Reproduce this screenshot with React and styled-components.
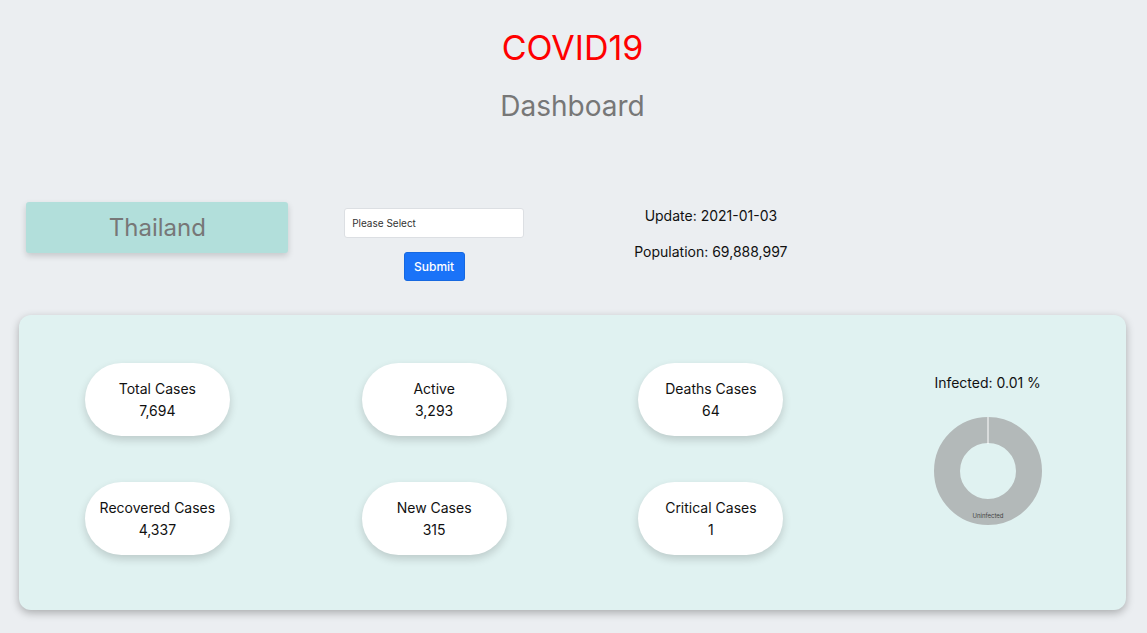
import React from 'react';
import styled, { createGlobalStyle } from 'styled-components';

const GlobalStyle = createGlobalStyle`
  body {
    margin: 0;
    background: #ebeef1;
    font-family: Inter, "Noto Sans", sans-serif;
    color: #111;
  }
`;

const Page = styled.div`
  padding: 0 21px 20px 19px;
`;

const Header = styled.div`
  text-align: center;
  padding-top: 27px;
`;

const Title = styled.h1`
  margin: 0;
  font-size: 34px;
  font-weight: 400;
  color: #ff0000;
  line-height: 42px;
`;

const SubTitle = styled.h2`
  margin: 19px 0 0 0;
  font-size: 28px;
  font-weight: 400;
  color: #777;
  line-height: 36px;
`;

const Row = styled.div`
  display: grid;
  grid-template-columns: repeat(4, 1fr);
  align-items: start;
`;

const TopRow = styled(Row)`
  margin-top: 77px;
  height: 114px;
`;

const Cell = styled.div`
  display: flex;
  flex-direction: column;
  align-items: center;
`;

const CountryBox = styled.div`
  width: 262px;
  height: 51px;
  margin-top: 1px;
  background: #b2dfdb;
  border-radius: 3px;
  box-shadow: 0 3px 6px rgba(0, 0, 0, 0.16);
  display: flex;
  align-items: center;
  justify-content: center;
  color: #777;
  font-size: 24px;
`;

const Select = styled.div`
  box-sizing: border-box;
  width: 180px;
  height: 30px;
  margin-top: 7px;
  background: #fff;
  border: 1px solid #dcdfe3;
  border-radius: 3px;
  display: flex;
  align-items: center;
  padding-left: 7px;
  font-size: 10px;
  color: #333;
`;

const SubmitButton = styled.button`
  box-sizing: border-box;
  margin-top: 14px;
  width: 61px;
  height: 29px;
  background: #1a73f8;
  color: #fff;
  border: 1px solid #1668e0;
  border-radius: 3px;
  font-family: inherit;
  font-size: 12px;
  font-weight: 500;
`;

const InfoText = styled.div`
  font-size: 14px;
  line-height: 20px;
  margin-top: ${p => p.$top}px;
`;

const Panel = styled.div`
  background: #e0f2f1;
  border-radius: 12px;
  box-shadow: 0 3px 8px rgba(0, 0, 0, 0.28);
  height: 295px;
  display: grid;
  grid-template-columns: repeat(4, 1fr);
`;

const CardGrid = styled.div`
  grid-column: span 3;
  display: grid;
  grid-template-columns: repeat(3, 1fr);
  row-gap: 46px;
  padding-top: 48px;
  align-content: start;
`;

const Card = styled.div`
  justify-self: center;
  width: 145px;
  height: 73px;
  background: #fff;
  border-radius: 37px;
  box-shadow: 0 4px 8px rgba(0, 0, 0, 0.16);
  display: flex;
  flex-direction: column;
  align-items: center;
  justify-content: center;
  font-size: 14px;
  line-height: 22px;
`;

const ChartCell = styled.div`
  display: flex;
  flex-direction: column;
  align-items: center;
  padding-top: 58px;
`;

const ChartLabel = styled.div`
  font-size: 14px;
  line-height: 20px;
  margin-bottom: 23px;
`;

const stats = [
  ['Total Cases', '7,694'],
  ['Active', '3,293'],
  ['Deaths Cases', '64'],
  ['Recovered Cases', '4,337'],
  ['New Cases', '315'],
  ['Critical Cases', '1'],
];

function Donut() {
  return (
    <svg width="110" height="110" viewBox="0 0 110 110">
      <circle cx="55" cy="55" r="41" fill="none" stroke="#b3b9b9" strokeWidth="26" />
      <line x1="55" y1="1" x2="55" y2="28" stroke="#ffffff" strokeWidth="1" />
      <text x="55" y="102" fontSize="6" textAnchor="middle" fill="#444" fontFamily="Inter, sans-serif">Uninfected</text>
    </svg>
  );
}

export default function App() {
  return (
    <Page>
      <GlobalStyle />
      <Header>
        <Title>COVID19</Title>
        <SubTitle>Dashboard</SubTitle>
      </Header>

      <TopRow>
        <Cell>
          <CountryBox>Thailand</CountryBox>
        </Cell>
        <Cell>
          <Select>Please Select</Select>
          <SubmitButton>Submit</SubmitButton>
        </Cell>
        <Cell>
          <InfoText $top={5}>Update: 2021-01-03</InfoText>
          <InfoText $top={16}>Population: 69,888,997</InfoText>
        </Cell>
        <Cell />
      </TopRow>

      <Panel>
        <CardGrid>
          {stats.map(([label, value]) => (
            <Card key={label}>
              <div>{label}</div>
              <div>{value}</div>
            </Card>
          ))}
        </CardGrid>
        <ChartCell>
          <ChartLabel>Infected: 0.01 %</ChartLabel>
          <Donut />
        </ChartCell>
      </Panel>
    </Page>
  );
}
